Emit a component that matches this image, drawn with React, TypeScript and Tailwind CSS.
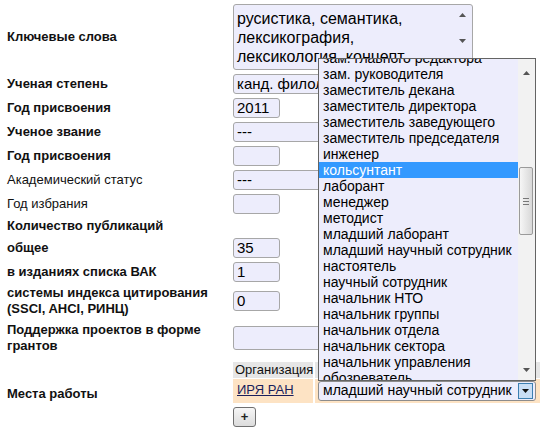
import type { ReactNode } from 'react';

const options = [
  'зам. главного редактора',
  'зам. руководителя',
  'заместитель декана',
  'заместитель директора',
  'заместитель заведующего',
  'заместитель председателя',
  'инженер',
  'кольсунтант',
  'лаборант',
  'менеджер',
  'методист',
  'младший лаборант',
  'младший научный сотрудник',
  'настоятель',
  'научный сотрудник',
  'начальник НТО',
  'начальник группы',
  'начальник отдела',
  'начальник сектора',
  'начальник управления',
  'обозреватель',
  'старший научный сотрудник',
];

function Row({ label, bold = true, h, children }: { label: ReactNode; bold?: boolean; h: string; children?: ReactNode }) {
  return (
    <div className={`flex items-center ${h}`}>
      <div className={`w-[233px] shrink-0 pl-[7px] pr-2 text-[13px] leading-[16px] text-[#111] ${bold ? 'font-bold' : ''}`}>
        {label}
      </div>
      <div className="flex-1">{children}</div>
    </div>
  );
}

function Input({ value = '', w = 'w-[47px]', h = 'h-[20px]' }: { value?: string; w?: string; h?: string }) {
  return (
    <div className={`${w} ${h} flex items-center rounded-[3px] border border-[#a7a7a7] bg-[#ededfc] pl-[3px] text-[15px] text-black`}>
      {value}
    </div>
  );
}

function Arrow({ up }: { up?: boolean }) {
  return (
    <svg width="7" height="4" viewBox="0 0 7 4">
      <path d={up ? 'M0 4 L3.5 0 L7 4 Z' : 'M0 0 L3.5 4 L7 0 Z'} fill="#555" />
    </svg>
  );
}

export default function App() {
  return (
    <div className="relative h-[433px] w-[540px] overflow-hidden bg-white font-['Liberation_Sans',Arial,sans-serif]">
      <div className="flex flex-col pt-[2px]">
        <Row label="Ключевые слова" h="h-[70px]">
          <div className="relative h-[66px] w-[240px] overflow-hidden rounded-[3px] border border-[#a7a7a7] bg-[#ededfc] pl-[3px] pr-[45px] pt-[4px] text-[16px] leading-[19px] text-black">
            русистика, семантика, лексикография, лексикология, концепт
            <div className="absolute right-[6px] top-[8px] flex h-[30px] flex-col justify-between">
              <Arrow up />
              <Arrow />
            </div>
          </div>
        </Row>
        <Row label="Ученая степень" h="h-[24px]">
          <Input value="канд. филологических наук" w="w-[240px]" />
        </Row>
        <Row label="Год присвоения" h="h-[24px]">
          <Input value="2011" />
        </Row>
        <Row label="Ученое звание" h="h-[24px]">
          <Input value="---" w="w-[240px]" />
        </Row>
        <Row label="Год присвоения" h="h-[24px]">
          <Input />
        </Row>
        <Row label="Академический статус" bold={false} h="h-[24px]">
          <Input value="---" w="w-[240px]" />
        </Row>
        <Row label="Год избрания" bold={false} h="h-[24px]">
          <Input />
        </Row>
        <Row label="Количество публикаций" h="h-[20px]" />
        <Row label="общее" h="h-[24px]">
          <Input value="35" />
        </Row>
        <Row label="в изданиях списка ВАК" h="h-[24px]">
          <Input value="1" />
        </Row>
        <Row label="системы индекса цитирования (SSCI, AHCI, РИНЦ)" h="h-[34px]">
          <Input value="0" />
        </Row>
        <Row label="Поддержка проектов в форме грантов" h="h-[40px]">
          <Input w="w-[240px]" h="h-[24px]" />
        </Row>
        <Row label="Места работы" h="h-[72px]">
          <div className="flex flex-col gap-[4px]">
            <div className="flex flex-col gap-[1px] text-[13px]">
              <div className="flex gap-[2px]">
                <div className="flex h-[16px] w-[80px] items-center bg-[#e6e6e6] pl-[2px] text-[#111]">Организация</div>
                <div className="h-[16px] flex-1 bg-[#e6e6e6]" />
              </div>
              <div className="flex h-[24px] gap-[2px]">
                <div className="w-[80px] bg-[#fde3c4] pl-[4px] pt-[1px]">
                  <a className="text-[#1a1f5c] underline">ИРЯ РАН</a>
                </div>
                <div className="flex flex-1 items-center bg-[#fde3c4] pl-[3px]">
                  <div className="flex h-[20px] w-[218px] items-center justify-between rounded-[3px] border border-[#8c8c8c] bg-[#ededfc] pl-[4px] pr-[2px] text-[14px] text-black">
                    <span>младший научный сотрудник</span>
                    <div className="flex h-[16px] w-[15px] items-center justify-center border border-[#3c7fb1] bg-[#c9def5]">
                      <svg width="7" height="4" viewBox="0 0 7 4">
                        <path d="M0 0 L3.5 4 L7 0 Z" fill="#111" />
                      </svg>
                    </div>
                  </div>
                </div>
              </div>
            </div>
            <div className="flex h-[20px] w-[23px] items-center justify-center rounded-[3px] border border-[#707070] bg-gradient-to-b from-[#f6f6f6] to-[#dcdcdc] text-[13px] font-bold text-[#222]">
              +
            </div>
          </div>
        </Row>
      </div>

      {/* открытый список должностей */}
      <div className="absolute left-[318px] top-[58px] flex h-[323px] w-[218px] overflow-hidden border border-[#646464] bg-[#ededfc]">
        <div className="flex-1 overflow-hidden">
          <div className="-mt-[9px]">
            {options.map((o, i) => (
              <div
                key={o}
                className={`h-[16px] pl-[4px] text-[14px] leading-[16px] ${i === 7 ? 'bg-[#3399ff] text-white' : 'text-black'}`}
              >
                {o}
              </div>
            ))}
          </div>
        </div>
        <div className="relative w-[17px] bg-[#f2f2f2]">
          <div className="absolute left-[5px] top-[12px]">
            <Arrow up />
          </div>
          <div className="absolute left-[1px] top-[108px] flex h-[68px] w-[14px] flex-col items-center justify-center gap-[2px] rounded-[2px] border border-[#9a9a9a] bg-gradient-to-r from-[#f6f6f6] to-[#d8d8d8]">
            <div className="h-px w-[6px] bg-[#777]" />
            <div className="h-px w-[6px] bg-[#777]" />
            <div className="h-px w-[6px] bg-[#777]" />
          </div>
          <div className="absolute bottom-[8px] left-[5px]">
            <Arrow />
          </div>
        </div>
      </div>
    </div>
  );
}
